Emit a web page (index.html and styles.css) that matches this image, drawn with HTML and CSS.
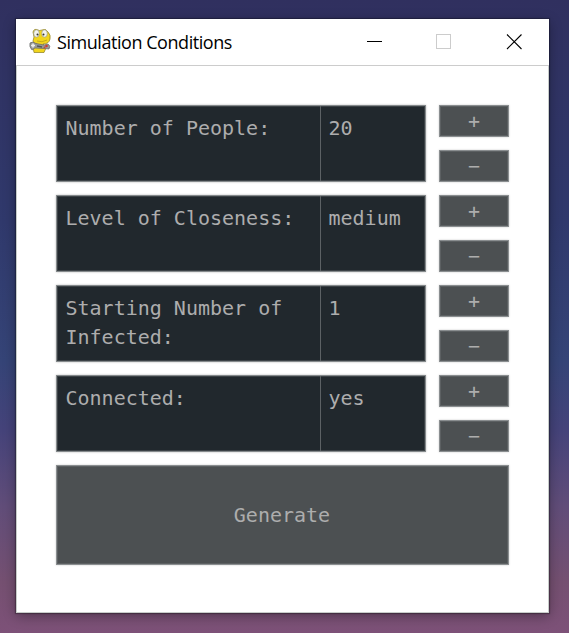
FILE: index.html
```html
<!DOCTYPE html>
<html lang="en">
<head>
<meta charset="utf-8">
<title>Simulation Conditions</title>
<link rel="stylesheet" href="styles.css">
</head>
<body>
<main class="window">
  <header class="titlebar">
    <svg class="logo" width="22" height="26" viewBox="0 0 22 26">
      <path d="M5 9L4 13Q5 16 8 16L4 19 5 24.500H15L17 20 14 16Q20 16 21 11Q22 7 19 4Q17 0 13 2Q10 3 9 2Q5 0 4 4Z" fill="#f1d51d" stroke="#8a7d24" stroke-width=".7"/>
      <ellipse cx="7.500" cy="5.500" rx="2.800" ry="3.700" fill="#f4f4ed" stroke="#8b8e80" stroke-width=".6"/>
      <ellipse cx="15.500" cy="5.500" rx="2.800" ry="3.700" fill="#f4f4ed" stroke="#8b8e80" stroke-width=".6"/>
      <circle cx="8.500" cy="6.500" r="1" fill="#333"/><circle cx="14.500" cy="6.500" r="1" fill="#333"/>
      <path d="M8 13Q13 15 18 12" fill="none" stroke="#b5a018" stroke-width=".8"/>
      <path d="M1 15Q3 13 7 15.500L15 17 19 16Q22 18 20 21L15 20.500 6 20 3 22Q0 19 1 15Z" fill="#999b98" stroke="#666" stroke-width=".7"/>
      <path d="M2 17.500H6M4 15.500V19.500" stroke="#eee" stroke-width="1.500"/>
      <path d="M8 18L13 19" stroke="#555" stroke-width="1.500"/>
      <circle cx="17.500" cy="18" r="1.300" fill="#d13d30"/><circle cx="15.500" cy="19.500" r="1" fill="#c34b3d"/>
    </svg>
    <h1 class="title">Simulation Conditions</h1>
    <svg class="controls" width="156" height="16" viewBox="0 0 156 16" shape-rendering="crispEdges">
      <path d="M0 7.500H15" stroke="#000"/>
      <rect x="69.500" y=".5" width="14" height="14" fill="none" stroke="#ccc"/>
      <path d="M140 .5L154.500 15M154.500 .5L140 15" stroke="#000" stroke-width="1.100" shape-rendering="auto"/>
    </svg>
  </header>
  <section class="content">
    <div class="row"><div class="field"><div class="label">Number of People:</div><div class="value">20</div></div><div class="steps"><button>+</button><button>−</button></div></div>
    <div class="row"><div class="field"><div class="label">Level of Closeness:</div><div class="value">medium</div></div><div class="steps"><button>+</button><button>−</button></div></div>
    <div class="row"><div class="field"><div class="label">Starting Number of<br>Infected:</div><div class="value">1</div></div><div class="steps"><button>+</button><button>−</button></div></div>
    <div class="row"><div class="field"><div class="label">Connected:</div><div class="value">yes</div></div><div class="steps"><button>+</button><button>−</button></div></div>
    <button class="generate">Generate</button>
  </section>
</main>
</body>
</html>
```
FILE: styles.css
```css
* { box-sizing: border-box; }
body {
  margin: 0;
  height: 633px;
  padding: 19px 20px 20px 16px;
  overflow: hidden;
  background: linear-gradient(#30305f 0, #30396c 35%, #354477 57%, #45437a 68%, #614d79 80%, #755071 92%, #7d5178 100%);
}
.window {
  width: 533px;
  height: 594px;
  background: #fff;
  box-shadow: 0 0 1px 1px #0004, 0 3px 12px #0005;
}
.titlebar {
  height: 47px;
  display: flex;
  align-items: center;
  padding: 0 26px 0 13px;
  border-bottom: 1px solid #ccc;
}
.logo { margin-top: -3px; }
.title {
  margin: -1px auto 0 6px;
  font: 400 18px/24px "Open Sans", sans-serif;
  letter-spacing: -0.45px;
  white-space: nowrap;
  color: #000;
}
.controls { margin-top: -1px; }
.content {
  height: 547px;
  padding: 39px 39px 0;
  border: solid #c8cdca;
  border-width: 0 1px 1px;
  display: flex;
  flex-direction: column;
  gap: 13px;
  font: 20px/29px "DejaVu Sans Mono", monospace;
  color: #adadad;
}
.row { display: flex; gap: 13px; height: 77px; }
.field {
  width: 370px;
  display: flex;
  background: #21282d;
  border: 1px solid #858a8c;
  box-shadow: inset 0 0 0 1px #3c4246, 0 0 2px #0004;
}
.label { width: 263px; padding: 8px 0 8px 8.5px; white-space: nowrap; }
.value { flex: 1; padding: 8px 0 8px 7.5px; border-left: 1px solid #5c6164; }
.steps { width: 70px; display: flex; flex-direction: column; gap: 13px; }
button {
  height: 32px;
  margin: 0;
  padding: 0;
  font: inherit;
  color: inherit;
  background: #4c5052;
  border: 1px solid #8a8e90;
  border-radius: 0;
  box-shadow: inset 0 0 0 1px #5c6062, 0 0 2px #0003;
}
.generate { width: 453px; height: 100px; padding-right: 1px; }
```
